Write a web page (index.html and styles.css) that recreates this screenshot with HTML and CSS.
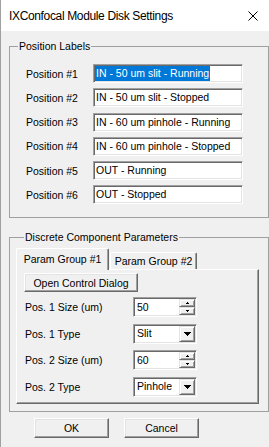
FILE: index.html
```html
<!DOCTYPE html>
<html>
<head>
<meta charset="utf-8">
<link rel="stylesheet" href="styles.css">
</head>
<body>
<div class="window">
  <div class="titlebar">
    <span class="title">IXConfocal Module Disk Settings</span>
    <svg class="close" width="10" height="10" viewBox="0 0 10 10"><path d="M0.5 0.5L9.5 9.5M9.5 0.5L0.5 9.5" stroke="#000" stroke-width="1"/></svg>
  </div>
  <fieldset class="group group-pos">
    <legend>Position Labels</legend>
    <div class="rows">
      <div class="pos-row"><span class="lbl">Position #1</span><div class="edit"><span class="val sel">IN - 50 um slit - Running</span></div></div>
      <div class="pos-row"><span class="lbl">Position #2</span><div class="edit"><span class="val">IN - 50 um slit - Stopped</span></div></div>
      <div class="pos-row"><span class="lbl">Position #3</span><div class="edit"><span class="val">IN - 60 um pinhole - Running</span></div></div>
      <div class="pos-row"><span class="lbl">Position #4</span><div class="edit"><span class="val">IN - 60 um pinhole - Stopped</span></div></div>
      <div class="pos-row"><span class="lbl">Position #5</span><div class="edit"><span class="val">OUT - Running</span></div></div>
      <div class="pos-row"><span class="lbl">Position #6</span><div class="edit"><span class="val">OUT - Stopped</span></div></div>
    </div>
  </fieldset>
  <fieldset class="group group-disc">
    <legend>Discrete Component Parameters</legend>
    <div class="tabs">
      <div class="tab active">Param Group #1</div>
      <div class="tab inactive">Param Group #2</div>
    </div>
    <div class="panel">
      <button class="btn open">Open Control Dialog</button>
      <div class="prow first">
        <span class="plbl">Pos. 1 Size (um)</span>
        <div class="box spin"><span class="txt">50</span>
          <div class="spinbtns">
            <div class="sb"><svg width="3" height="2" viewBox="0 0 3 2"><path d="M1 0h1v1h1v1H0V1h1z" fill="#000"/></svg></div>
            <div class="sb"><svg width="3" height="2" viewBox="0 0 3 2"><path d="M0 0h3v1H2v1H1V1H0z" fill="#000"/></svg></div>
          </div>
        </div>
      </div>
      <div class="prow">
        <span class="plbl">Pos. 1 Type</span>
        <div class="box combo"><span class="txt">Slit</span>
          <div class="ddb"><svg width="7" height="4" viewBox="0 0 7 4"><path d="M0 0h7v1H6v1H5v1H4v1H3V3H2V2H1V1H0z" fill="#000"/></svg></div>
        </div>
      </div>
      <div class="prow">
        <span class="plbl">Pos. 2 Size (um)</span>
        <div class="box spin"><span class="txt">60</span>
          <div class="spinbtns">
            <div class="sb"><svg width="3" height="2" viewBox="0 0 3 2"><path d="M1 0h1v1h1v1H0V1h1z" fill="#000"/></svg></div>
            <div class="sb"><svg width="3" height="2" viewBox="0 0 3 2"><path d="M0 0h3v1H2v1H1V1H0z" fill="#000"/></svg></div>
          </div>
        </div>
      </div>
      <div class="prow">
        <span class="plbl">Pos. 2 Type</span>
        <div class="box combo"><span class="txt">Pinhole</span>
          <div class="ddb"><svg width="7" height="4" viewBox="0 0 7 4"><path d="M0 0h7v1H6v1H5v1H4v1H3V3H2V2H1V1H0z" fill="#000"/></svg></div>
        </div>
      </div>
    </div>
  </fieldset>
  <div class="buttons">
    <button class="btn dlg">OK</button>
    <button class="btn dlg">Cancel</button>
  </div>
</div>
</body>
</html>
```
FILE: styles.css
```css
* { box-sizing: border-box; }
html, body { margin: 0; padding: 0; }
body {
  width: 269px;
  height: 447px;
  overflow: hidden;
  background: #f0f0f0;
  font-family: "Liberation Sans", Arial, sans-serif;
  font-size: 10.5px;
  color: #000;
}
.window {
  width: 269px;
  height: 447px;
  border-left: 1px solid #a0a0a0;
  background: #f0f0f0;
  display: flex;
  flex-direction: column;
}
.titlebar {
  height: 31px;
  flex: none;
  background: #fff;
  display: flex;
  align-items: center;
  padding-left: 8px;
}
.title { font-size: 12px; letter-spacing: -0.35px; line-height: 14px; }
.close { margin-left: auto; margin-right: 11px; display: block; }

.group {
  margin: 9px 0 0 8px;
  padding: 0;
  border: 1px solid #a0a0a0;
  min-width: 0;
  flex: none;
}
.group legend {
  margin-left: 8px;
  padding: 0 1px;
  line-height: 13px;
  height: 13px;
}
.group-pos { padding: 11px 0 12.75px 0; }
.rows { display: flex; flex-direction: column; gap: 5.25px; }
.pos-row {
  display: flex;
  align-items: center;
  height: 19px;
  padding-left: 16px;
}
.lbl { width: 67px; white-space: nowrap; }
.edit {
  width: 150px;
  height: 19px;
  background: #fff;
  border: 1px solid;
  border-color: #a0a0a0 #fff #fff #a0a0a0;
  box-shadow: inset 1px 1px #696969, inset -1px -1px #e3e3e3;
  padding-left: 1px;
  display: flex;
  align-items: center;
  white-space: nowrap;
  overflow: hidden;
}
.val { padding: 0 1px; line-height: 15px; }
.sel { background: #0078d7; color: #fff; }

.group-disc { margin-top: 13px; padding: 4px 9px 7px 6px; }
.tabs { display: flex; align-items: flex-end; height: 21px; }
.tab {
  height: 17px;
  border: 1px solid;
  border-color: #fff #696969 transparent #fff;
  border-bottom: 0;
  border-radius: 2px 2px 0 0;
  box-shadow: inset -1px 0 #a0a0a0;
  display: flex;
  align-items: center;
  justify-content: center;
  white-space: nowrap;
  background: #f0f0f0;
}
.tab.active {
  width: 93px;
  height: 22px;
  margin-bottom: -1px;
  padding-bottom: 2px;
  position: relative;
  z-index: 1;
}
.tab.inactive { width: 87px; margin-left: 1px; }
.panel {
  width: 243px;
  height: 135px;
  border: 1px solid;
  border-color: #fff #696969 #696969 #fff;
  box-shadow: inset -1px -1px #a0a0a0;
  padding: 3px 0 0 7px;
  display: flex;
  flex-direction: column;
  align-items: flex-start;
}
.btn {
  font: inherit;
  color: #000;
  background: #f0f0f0;
  border: 1px solid;
  border-color: #fff #696969 #696969 #fff;
  box-shadow: inset -1px -1px #a0a0a0, inset 1px 1px #e3e3e3;
  padding: 0;
  margin: 0;
  white-space: nowrap;
}
.open { width: 114px; height: 19px; }
.prow {
  display: flex;
  align-items: center;
  height: 20px;
  margin-left: 1px;
  margin-top: 6.5px;
}
.prow.first { margin-top: 5px; }
.plbl { width: 108px; white-space: nowrap; }
.box {
  width: 64px;
  height: 20px;
  background: #fff;
  border: 1px solid;
  border-color: #a0a0a0 #fff #fff #a0a0a0;
  box-shadow: inset 1px 1px #696969, inset -1px -1px #e3e3e3;
  padding-left: 3px;
  display: flex;
  align-items: center;
}
.txt { line-height: 15px; white-space: nowrap; }
.spinbtns {
  margin-left: auto;
  margin-right: 1px;
  width: 16px;
  height: 16px;
  display: flex;
  flex-direction: column;
}
.sb, .ddb {
  background: #f0f0f0;
  border: 1px solid;
  border-color: #e3e3e3 #696969 #696969 #e3e3e3;
  box-shadow: inset 1px 1px #fff, inset -1px -1px #a0a0a0;
  display: flex;
  align-items: center;
  justify-content: center;
}
.sb { width: 16px; height: 8px; }
.sb svg, .ddb svg { display: block; }
.ddb { margin-left: auto; margin-right: 1px; width: 16px; height: 16px; }

.buttons {
  display: flex;
  gap: 15px;
  margin: 6px 0 0 33px;
}
.dlg { width: 75px; height: 20px; }
```
